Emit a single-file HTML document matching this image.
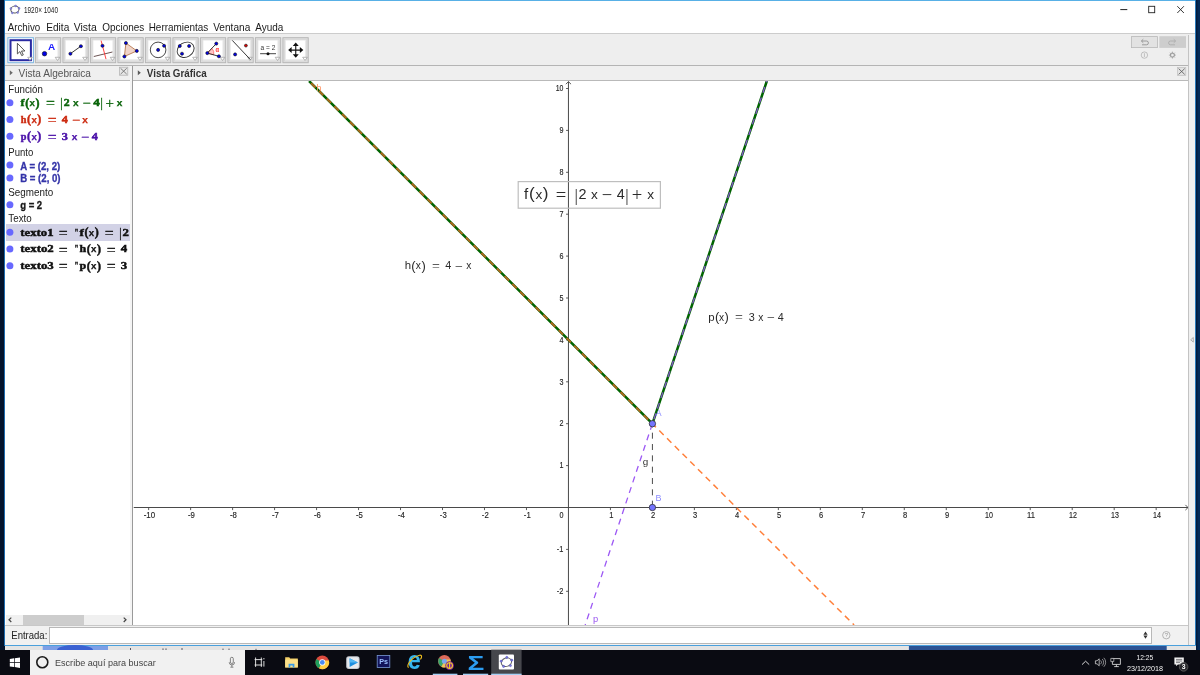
<!DOCTYPE html>
<html lang="es"><head><meta charset="utf-8"><title>1920x1040</title>
<style>
html,body{margin:0;padding:0}
body{width:1200px;height:675px;overflow:hidden;background:#03132c;position:relative;font-family:"Liberation Sans",sans-serif;color:#222}
.abs{position:absolute}
#win{position:absolute;left:5px;top:0;width:1190px;height:645.5px;background:#fff}
#lline{position:absolute;left:3.9px;top:0;width:1.2px;height:646px;background:#1d6cb0}
#rdark{position:absolute;left:1196px;top:0;width:4px;height:650px;background:linear-gradient(90deg,#021837,#032a58 60%)}
#topline{position:absolute;left:4.5px;top:0;width:1191.5px;height:1.2px;background:#58b0e6}
#rline{position:absolute;left:1194.9px;top:0;width:1.2px;height:646px;background:#2a7aba}
#bline{position:absolute;left:4.5px;top:644.8px;width:1191.5px;height:1.2px;background:#4aa0dc}
#toolbar{position:absolute;left:5px;top:33.4px;width:1190px;height:32px;background:#eeeeee;border-top:1.6px solid #cccccc;box-sizing:border-box}
#tbline{position:absolute;left:5px;top:64.8px;width:1184px;height:1.2px;background:#b4b4b4}
#hdr{position:absolute;left:5px;top:66px;width:1184px;height:14.3px;background:#efefef}
#hdrline{position:absolute;left:5px;top:80px;width:1184px;height:1px;background:#b9b9b9}
#rstrip{position:absolute;left:1189px;top:35px;width:6px;height:610px;background:#f0f0f0}
#rvline{position:absolute;left:1188px;top:35px;width:1px;height:610px;background:#c3c3c3}
#split{position:absolute;left:130px;top:66px;width:3px;height:559px;background:#f4f4f4;border-right:1px solid #9a9a9a;box-sizing:border-box}
#alg{position:absolute;left:5px;top:81px;width:125.5px;height:544px;background:#fff;overflow:hidden}
#sel{position:absolute;left:5.5px;top:224.3px;width:124.5px;height:16.3px;background:#d2d2e6}
#hscroll{position:absolute;left:5.5px;top:615px;width:124.5px;height:9.5px;background:#f0f0f0}
#hthumb{position:absolute;left:22.7px;top:615px;width:61.3px;height:9.5px;background:#cdcdcd}
#inputbar{position:absolute;left:5px;top:625px;width:1183px;height:20px;background:#f1f1f1;border-top:1px solid #c8c8c8;box-sizing:border-box}
#inputfld{position:absolute;left:49px;top:627px;width:1103px;height:17px;background:#fff;border:1px solid #b8b8b8;box-sizing:border-box}
#strip{position:absolute;left:4.5px;top:646px;width:1191px;height:4px;background:#e4e4e4}
#taskbar{position:absolute;left:0;top:649.7px;width:1200px;height:25.3px;background:#0a0b12}
#search{position:absolute;left:30px;top:649.7px;width:215.3px;height:25.3px;background:#f1f1f1}
#ovl{position:absolute;left:0;top:0;will-change:transform}
</style></head><body>

<div id="win"></div><div id="topline"></div><div id="rline"></div><div id="lline"></div><div id="rdark"></div>
<div id="toolbar"></div><div id="tbline"></div><div id="hdr"></div><div id="hdrline"></div><div id="rstrip"></div><div id="rvline"></div>
<div id="alg"></div><div id="split"></div><div id="sel"></div><div id="hscroll"></div><div id="hthumb"></div>
<div id="inputbar"></div><div id="inputfld"></div><div id="bline"></div><div id="strip"></div><div id="taskbar"></div><div id="search"></div>
<svg id="ovl" width="1200" height="675" viewBox="0 0 1200 675">
<g id="titlebar">
<ellipse cx="14.9" cy="9.5" rx="4.1" ry="3.5" transform="rotate(-15 14.9 9.5)" fill="none" stroke="#5a5a5a" stroke-width="1"/>
<circle cx="15.6" cy="5.9" r="1" fill="#8c8ce6" stroke="#4a4aa8" stroke-width="0.3"/>
<circle cx="19.1" cy="8.3" r="1" fill="#8c8ce6" stroke="#4a4aa8" stroke-width="0.3"/>
<circle cx="17.7" cy="12.6" r="1" fill="#8c8ce6" stroke="#4a4aa8" stroke-width="0.3"/>
<circle cx="12.3" cy="12.9" r="1" fill="#8c8ce6" stroke="#4a4aa8" stroke-width="0.3"/>
<circle cx="10.8" cy="8.6" r="1" fill="#8c8ce6" stroke="#4a4aa8" stroke-width="0.3"/>
<text x="24" y="12.5" font-family="'Liberation Sans',sans-serif" font-size="8.3" fill="#222" textLength="34" lengthAdjust="spacingAndGlyphs">1920× 1040</text>
<path d="M1120.3 9.6h7" stroke="#222" stroke-width="1"/>
<rect x="1148.7" y="6.3" width="6" height="6.4" fill="none" stroke="#222" stroke-width="0.9"/>
<path d="M1177.3 6.2l6.6 6.8M1183.9 6.2l-6.6 6.8" stroke="#222" stroke-width="0.9"/>
</g>
<g id="menu">
<text x="7.7" y="30.7" font-family="'Liberation Sans',sans-serif" font-size="10.3" fill="#1a1a1a" textLength="32.6" lengthAdjust="spacingAndGlyphs">Archivo</text>
<text x="46.2" y="30.7" font-family="'Liberation Sans',sans-serif" font-size="10.3" fill="#1a1a1a" textLength="23.1" lengthAdjust="spacingAndGlyphs">Edita</text>
<text x="73.7" y="30.7" font-family="'Liberation Sans',sans-serif" font-size="10.3" fill="#1a1a1a" textLength="23.1" lengthAdjust="spacingAndGlyphs">Vista</text>
<text x="102.2" y="30.7" font-family="'Liberation Sans',sans-serif" font-size="10.3" fill="#1a1a1a" textLength="42.1" lengthAdjust="spacingAndGlyphs">Opciones</text>
<text x="148.7" y="30.7" font-family="'Liberation Sans',sans-serif" font-size="10.3" fill="#1a1a1a" textLength="59.6" lengthAdjust="spacingAndGlyphs">Herramientas</text>
<text x="213.2" y="30.7" font-family="'Liberation Sans',sans-serif" font-size="10.3" fill="#1a1a1a" textLength="37.1" lengthAdjust="spacingAndGlyphs">Ventana</text>
<text x="255.2" y="30.7" font-family="'Liberation Sans',sans-serif" font-size="10.3" fill="#1a1a1a" textLength="28.1" lengthAdjust="spacingAndGlyphs">Ayuda</text>
</g>
<g id="tools">
<rect x="7.9" y="37.7" width="25.5" height="25" fill="#fff" stroke="#7ab4e0" stroke-width="1"/>
<rect x="10.5" y="40.2" width="20.4" height="20" fill="#fff" stroke="#2b2ba2" stroke-width="2"/>
<path d="M27.7 57.3h4.6l-2.3 3.2z" fill="#fff" stroke="#9a9a9a" stroke-width="0.7"/>
<rect x="35.4" y="37.7" width="25.3" height="25" fill="#e0e0e0" stroke="#b6b6b6" stroke-width="1"/>
<rect x="37.1" y="39.4" width="21.9" height="21.6" fill="#e9e9e9" stroke="#d2d2d2" stroke-width="0.6"/>
<rect x="38.4" y="40.6" width="19" height="18.6" fill="#fff"/>
<path d="M55.2 57.3h4.6l-2.3 3.2z" fill="#fff" stroke="#9a9a9a" stroke-width="0.7"/>
<rect x="62.9" y="37.7" width="25.3" height="25" fill="#e0e0e0" stroke="#b6b6b6" stroke-width="1"/>
<rect x="64.6" y="39.4" width="21.9" height="21.6" fill="#e9e9e9" stroke="#d2d2d2" stroke-width="0.6"/>
<rect x="65.9" y="40.6" width="19" height="18.6" fill="#fff"/>
<path d="M82.7 57.3h4.6l-2.3 3.2z" fill="#fff" stroke="#9a9a9a" stroke-width="0.7"/>
<rect x="90.4" y="37.7" width="25.3" height="25" fill="#e0e0e0" stroke="#b6b6b6" stroke-width="1"/>
<rect x="92.1" y="39.4" width="21.9" height="21.6" fill="#e9e9e9" stroke="#d2d2d2" stroke-width="0.6"/>
<rect x="93.4" y="40.6" width="19" height="18.6" fill="#fff"/>
<path d="M110.2 57.3h4.6l-2.3 3.2z" fill="#fff" stroke="#9a9a9a" stroke-width="0.7"/>
<rect x="117.9" y="37.7" width="25.3" height="25" fill="#e0e0e0" stroke="#b6b6b6" stroke-width="1"/>
<rect x="119.6" y="39.4" width="21.9" height="21.6" fill="#e9e9e9" stroke="#d2d2d2" stroke-width="0.6"/>
<rect x="120.9" y="40.6" width="19" height="18.6" fill="#fff"/>
<path d="M137.7 57.3h4.6l-2.3 3.2z" fill="#fff" stroke="#9a9a9a" stroke-width="0.7"/>
<rect x="145.4" y="37.7" width="25.3" height="25" fill="#e0e0e0" stroke="#b6b6b6" stroke-width="1"/>
<rect x="147.1" y="39.4" width="21.9" height="21.6" fill="#e9e9e9" stroke="#d2d2d2" stroke-width="0.6"/>
<rect x="148.4" y="40.6" width="19" height="18.6" fill="#fff"/>
<path d="M165.2 57.3h4.6l-2.3 3.2z" fill="#fff" stroke="#9a9a9a" stroke-width="0.7"/>
<rect x="172.9" y="37.7" width="25.3" height="25" fill="#e0e0e0" stroke="#b6b6b6" stroke-width="1"/>
<rect x="174.6" y="39.4" width="21.9" height="21.6" fill="#e9e9e9" stroke="#d2d2d2" stroke-width="0.6"/>
<rect x="175.9" y="40.6" width="19" height="18.6" fill="#fff"/>
<path d="M192.7 57.3h4.6l-2.3 3.2z" fill="#fff" stroke="#9a9a9a" stroke-width="0.7"/>
<rect x="200.4" y="37.7" width="25.3" height="25" fill="#e0e0e0" stroke="#b6b6b6" stroke-width="1"/>
<rect x="202.1" y="39.4" width="21.9" height="21.6" fill="#e9e9e9" stroke="#d2d2d2" stroke-width="0.6"/>
<rect x="203.4" y="40.6" width="19" height="18.6" fill="#fff"/>
<path d="M220.2 57.3h4.6l-2.3 3.2z" fill="#fff" stroke="#9a9a9a" stroke-width="0.7"/>
<rect x="227.9" y="37.7" width="25.3" height="25" fill="#e0e0e0" stroke="#b6b6b6" stroke-width="1"/>
<rect x="229.6" y="39.4" width="21.9" height="21.6" fill="#e9e9e9" stroke="#d2d2d2" stroke-width="0.6"/>
<rect x="230.9" y="40.6" width="19" height="18.6" fill="#fff"/>
<path d="M247.7 57.3h4.6l-2.3 3.2z" fill="#fff" stroke="#9a9a9a" stroke-width="0.7"/>
<rect x="255.4" y="37.7" width="25.3" height="25" fill="#e0e0e0" stroke="#b6b6b6" stroke-width="1"/>
<rect x="257.1" y="39.4" width="21.9" height="21.6" fill="#e9e9e9" stroke="#d2d2d2" stroke-width="0.6"/>
<rect x="258.4" y="40.6" width="19" height="18.6" fill="#fff"/>
<path d="M275.2 57.3h4.6l-2.3 3.2z" fill="#fff" stroke="#9a9a9a" stroke-width="0.7"/>
<rect x="282.9" y="37.7" width="25.3" height="25" fill="#e0e0e0" stroke="#b6b6b6" stroke-width="1"/>
<rect x="284.6" y="39.4" width="21.9" height="21.6" fill="#e9e9e9" stroke="#d2d2d2" stroke-width="0.6"/>
<rect x="285.9" y="40.6" width="19" height="18.6" fill="#fff"/>
<path d="M302.7 57.3h4.6l-2.3 3.2z" fill="#fff" stroke="#9a9a9a" stroke-width="0.7"/>
<path d="M17.4 43.3v10.6l2.5-2.3 1.8 4 1.6-0.7-1.8-3.9h3.4z" fill="#fff" stroke="#444" stroke-width="0.9" stroke-linejoin="round"/>
<circle cx="44.5" cy="53.7" r="2.25" fill="#0000e6" stroke="#111" stroke-width="0.6"/>
<text x="48" y="49.9" font-family="'Liberation Sans',sans-serif" font-size="9.8" fill="#1a1aff" font-weight="bold" textLength="7.2" lengthAdjust="spacingAndGlyphs">A</text>
<path d="M70.4 53.7L80.9 46.2" stroke="#222" stroke-width="0.9"/><circle cx="70.4" cy="53.7" r="1.55" fill="#0000e6" stroke="#111" stroke-width="0.6"/><circle cx="80.9" cy="46.2" r="1.55" fill="#0000e6" stroke="#111" stroke-width="0.6"/>
<path d="M93.8 56.5L112.4 52" stroke="#5a4040" stroke-width="0.9"/><path d="M101.1 40.6L106 59.1" stroke="#ff3030" stroke-width="0.9"/><circle cx="102.5" cy="45.8" r="1.55" fill="#0000e6" stroke="#111" stroke-width="0.6"/>
<path d="M125.9 43L136.8 50.9L124.4 56.5z" fill="#f0d4c8" stroke="#b87850" stroke-width="0.9"/><circle cx="125.9" cy="43" r="1.55" fill="#0000e6" stroke="#111" stroke-width="0.6"/><circle cx="136.8" cy="50.9" r="1.55" fill="#0000e6" stroke="#111" stroke-width="0.6"/><circle cx="124.4" cy="56.5" r="1.55" fill="#0000e6" stroke="#111" stroke-width="0.6"/>
<circle cx="158.1" cy="49.9" r="7.8" fill="none" stroke="#333" stroke-width="0.9"/><circle cx="158.1" cy="49.9" r="1.55" fill="#0000e6" stroke="#111" stroke-width="0.6"/><circle cx="164.1" cy="45.8" r="1.55" fill="#0000e6" stroke="#111" stroke-width="0.6"/>
<ellipse cx="185.6" cy="49.8" rx="8.9" ry="7.2" transform="rotate(-32 185.6 49.8)" fill="none" stroke="#333" stroke-width="0.9"/><circle cx="179.8" cy="46" r="1.55" fill="#0000e6" stroke="#111" stroke-width="0.6"/><circle cx="189.1" cy="46" r="1.55" fill="#0000e6" stroke="#111" stroke-width="0.6"/><circle cx="182" cy="53.7" r="1.55" fill="#0000e6" stroke="#111" stroke-width="0.6"/>
<path d="M207.3 53.1L211.8 48.3A6.6 6.6 0 0 1 213.7 54.8z" fill="#ffc4c4" stroke="#ff4a4a" stroke-width="0.6"/><path d="M216.3 43.6L207.3 53.1L218.9 56.3" fill="none" stroke="#222" stroke-width="0.9"/><circle cx="207.3" cy="53.1" r="1.55" fill="#0000e6" stroke="#111" stroke-width="0.6"/><circle cx="216.3" cy="43.6" r="1.55" fill="#0000e6" stroke="#111" stroke-width="0.6"/><circle cx="218.9" cy="56.3" r="1.55" fill="#0000e6" stroke="#111" stroke-width="0.6"/>
<text x="215.6" y="51.9" font-family="'Liberation Sans',sans-serif" font-size="6.6" fill="#ff3030" font-weight="bold" textLength="3.6" lengthAdjust="spacingAndGlyphs">α</text>
<path d="M232.3 40.4L250.3 59.5" stroke="#222" stroke-width="0.9"/><circle cx="245.9" cy="45.6" r="1.4500000000000002" fill="#e00000" stroke="#111" stroke-width="0.6"/><circle cx="235.1" cy="54.4" r="1.55" fill="#0000e6" stroke="#111" stroke-width="0.6"/>
<text x="260.6" y="49.9" font-family="'Liberation Sans',sans-serif" font-size="7.2" fill="#333" textLength="14.7" lengthAdjust="spacingAndGlyphs">a = 2</text>
<path d="M260.1 53.7H276" stroke="#333" stroke-width="0.9"/><circle cx="268" cy="53.7" r="1.5" fill="#111"/>
<path d="M290.75 50.1H300.75M295.75 45.1V55.1" stroke="#111" stroke-width="1.1"/>
<path d="M288.15 50.1l3.5-3v6zM303.35 50.1l-3.5-3v6zM295.75 42.5l-3 3.5h6zM295.75 57.7l-3-3.5h6z" fill="#111"/>
<rect x="1131.5" y="36.6" width="26" height="11" fill="#e2e2e2" stroke="#b8b8b8" stroke-width="0.8"/>
<rect x="1159.3" y="36.2" width="26.7" height="11.7" fill="#cdcdcd"/>
<path d="M1141.5 41h5a1.9 1.9 0 0 1 0 3.8h-4.5M1143.3 39.2l-1.9 1.8 1.9 1.8" fill="none" stroke="#8a8a8a" stroke-width="0.8"/>
<path d="M1175.5 41h-5a1.9 1.9 0 0 0 0 3.8h4.5M1173.7 39.2l1.9 1.8-1.9 1.8" fill="none" stroke="#a8a8a8" stroke-width="0.8"/>
<circle cx="1144.4" cy="55.1" r="3.2" fill="none" stroke="#aaa" stroke-width="0.7"/><path d="M1144.4 53.2v3.8" stroke="#aaa" stroke-width="0.7"/>
<circle cx="1172.4" cy="55.1" r="2.1" fill="none" stroke="#999" stroke-width="1"/><path d="M1172.4 51.6v7M1168.9 55.1h7M1170 52.7l4.8 4.8M1174.8 52.7l-4.8 4.8" stroke="#999" stroke-width="0.7"/><circle cx="1172.4" cy="55.1" r="1.2" fill="#eee"/>
</g>
<g id="headers">
<path d="M9.8 70.2v5l3-2.5z" fill="#6a6a6a"/>
<text x="18.6" y="76.7" font-family="'Liberation Sans',sans-serif" font-size="10.3" fill="#555" textLength="72.4" lengthAdjust="spacingAndGlyphs">Vista Algebraica</text>
<rect x="119.5" y="67.2" width="8.3" height="8" fill="#e6e6e6" stroke="#b0b0b0" stroke-width="0.7"/><path d="M120.6 68.3l6.1 5.8M126.7 68.3l-6.1 5.8" stroke="#666" stroke-width="0.8"/>
<path d="M137.8 70.2v5l3-2.5z" fill="#5a5a5a"/>
<text x="146.8" y="76.7" font-family="'Liberation Sans',sans-serif" font-size="10.3" fill="#333" font-weight="bold" textLength="60" lengthAdjust="spacingAndGlyphs">Vista Gráfica</text>
<rect x="1177.5" y="67.5" width="8.3" height="8" fill="#e2e2e2" stroke="#c0c0c0" stroke-width="0.7"/><path d="M1178.6 68.6l6.1 5.8M1184.7 68.6l-6.1 5.8" stroke="#555" stroke-width="0.8"/>
<path d="M1193.3 337.5l-2.6 2.3 2.6 2.3z" fill="none" stroke="#888" stroke-width="0.6"/>
</g>
<g id="algebra">
<text x="8.3" y="92.7" font-family="'Liberation Sans',sans-serif" font-size="10.3" fill="#222" textLength="34.5" lengthAdjust="spacingAndGlyphs">Función</text>
<circle cx="9.9" cy="102.75" r="3.5" fill="#6868ff"/>
<text x="20.6" y="105.9" font-family="'Liberation Serif',serif" font-size="11.2" fill="#0a640a" font-weight="bold" textLength="4" lengthAdjust="spacingAndGlyphs" stroke="#0a640a" stroke-width="0.5">f</text><text x="25.2" y="106.5" font-family="'Liberation Serif',serif" font-size="12.8" fill="#0a640a" font-weight="bold" textLength="4" lengthAdjust="spacingAndGlyphs" stroke="#0a640a" stroke-width="0.5">(</text><text x="29.6" y="105.9" font-family="'Liberation Sans',sans-serif" font-size="9.8" fill="#0a640a" font-weight="bold" textLength="5.4" lengthAdjust="spacingAndGlyphs" stroke="#0a640a" stroke-width="0.25">x</text><text x="35.5" y="106.5" font-family="'Liberation Serif',serif" font-size="12.8" fill="#0a640a" font-weight="bold" textLength="4" lengthAdjust="spacingAndGlyphs" stroke="#0a640a" stroke-width="0.5">)</text><text x="45.9" y="108.2" font-family="'Liberation Serif',serif" font-size="15" fill="#0a640a" textLength="8.9" lengthAdjust="spacingAndGlyphs" stroke="#0a640a" stroke-width="0.3">=</text><text x="60.6" y="107.1" font-family="'Liberation Serif',serif" font-size="13.4" fill="#0a640a" font-weight="bold" textLength="1.8" lengthAdjust="spacingAndGlyphs" stroke="#0a640a" stroke-width="0.5">|</text><text x="63.8" y="105.9" font-family="'Liberation Serif',serif" font-size="10.9" fill="#0a640a" font-weight="bold" textLength="5.9" lengthAdjust="spacingAndGlyphs" stroke="#0a640a" stroke-width="0.5">2</text><text x="73" y="105.9" font-family="'Liberation Sans',sans-serif" font-size="9.8" fill="#0a640a" font-weight="bold" textLength="5.6" lengthAdjust="spacingAndGlyphs" stroke="#0a640a" stroke-width="0.25">x</text><text x="82.4" y="108.2" font-family="'Liberation Serif',serif" font-size="15" fill="#0a640a" textLength="8.2" lengthAdjust="spacingAndGlyphs" stroke="#0a640a" stroke-width="0.3">−</text><text x="93.3" y="105.9" font-family="'Liberation Serif',serif" font-size="10.9" fill="#0a640a" font-weight="bold" textLength="6.6" lengthAdjust="spacingAndGlyphs" stroke="#0a640a" stroke-width="0.5">4</text><text x="100.7" y="107.1" font-family="'Liberation Serif',serif" font-size="13.4" fill="#0a640a" font-weight="bold" textLength="1.8" lengthAdjust="spacingAndGlyphs" stroke="#0a640a" stroke-width="0.5">|</text><text x="105.4" y="108.2" font-family="'Liberation Serif',serif" font-size="15" fill="#0a640a" textLength="8.4" lengthAdjust="spacingAndGlyphs" stroke="#0a640a" stroke-width="0.3">+</text><text x="116.8" y="105.9" font-family="'Liberation Sans',sans-serif" font-size="9.8" fill="#0a640a" font-weight="bold" textLength="5.6" lengthAdjust="spacingAndGlyphs" stroke="#0a640a" stroke-width="0.25">x</text>
<circle cx="9.9" cy="119.5" r="3.5" fill="#6868ff"/>
<text x="20.7" y="122.8" font-family="'Liberation Serif',serif" font-size="11.2" fill="#cc2a10" font-weight="bold" textLength="5.7" lengthAdjust="spacingAndGlyphs" stroke="#cc2a10" stroke-width="0.5">h</text><text x="27" y="123.4" font-family="'Liberation Serif',serif" font-size="12.8" fill="#cc2a10" font-weight="bold" textLength="4" lengthAdjust="spacingAndGlyphs" stroke="#cc2a10" stroke-width="0.5">(</text><text x="31.4" y="122.8" font-family="'Liberation Sans',sans-serif" font-size="9.8" fill="#cc2a10" font-weight="bold" textLength="5.4" lengthAdjust="spacingAndGlyphs" stroke="#cc2a10" stroke-width="0.25">x</text><text x="37.3" y="123.4" font-family="'Liberation Serif',serif" font-size="12.8" fill="#cc2a10" font-weight="bold" textLength="4" lengthAdjust="spacingAndGlyphs" stroke="#cc2a10" stroke-width="0.5">)</text><text x="47.8" y="125.1" font-family="'Liberation Serif',serif" font-size="15" fill="#cc2a10" textLength="8.9" lengthAdjust="spacingAndGlyphs" stroke="#cc2a10" stroke-width="0.3">=</text><text x="61.7" y="122.8" font-family="'Liberation Serif',serif" font-size="10.9" fill="#cc2a10" font-weight="bold" textLength="6.1" lengthAdjust="spacingAndGlyphs" stroke="#cc2a10" stroke-width="0.5">4</text><text x="72" y="125.1" font-family="'Liberation Serif',serif" font-size="15" fill="#cc2a10" textLength="8.2" lengthAdjust="spacingAndGlyphs" stroke="#cc2a10" stroke-width="0.3">−</text><text x="82.3" y="122.8" font-family="'Liberation Sans',sans-serif" font-size="9.8" fill="#cc2a10" font-weight="bold" textLength="5.6" lengthAdjust="spacingAndGlyphs" stroke="#cc2a10" stroke-width="0.25">x</text>
<circle cx="9.9" cy="136.3" r="3.5" fill="#6868ff"/>
<text x="20.7" y="139.6" font-family="'Liberation Serif',serif" font-size="11.2" fill="#4a10a8" font-weight="bold" textLength="5.7" lengthAdjust="spacingAndGlyphs" stroke="#4a10a8" stroke-width="0.5">p</text><text x="27" y="140.2" font-family="'Liberation Serif',serif" font-size="12.8" fill="#4a10a8" font-weight="bold" textLength="4" lengthAdjust="spacingAndGlyphs" stroke="#4a10a8" stroke-width="0.5">(</text><text x="31.4" y="139.6" font-family="'Liberation Sans',sans-serif" font-size="9.8" fill="#4a10a8" font-weight="bold" textLength="5.4" lengthAdjust="spacingAndGlyphs" stroke="#4a10a8" stroke-width="0.25">x</text><text x="37.3" y="140.2" font-family="'Liberation Serif',serif" font-size="12.8" fill="#4a10a8" font-weight="bold" textLength="4" lengthAdjust="spacingAndGlyphs" stroke="#4a10a8" stroke-width="0.5">)</text><text x="47.8" y="141.9" font-family="'Liberation Serif',serif" font-size="15" fill="#4a10a8" textLength="8.9" lengthAdjust="spacingAndGlyphs" stroke="#4a10a8" stroke-width="0.3">=</text><text x="61.7" y="139.6" font-family="'Liberation Serif',serif" font-size="10.9" fill="#4a10a8" font-weight="bold" textLength="6.1" lengthAdjust="spacingAndGlyphs" stroke="#4a10a8" stroke-width="0.5">3</text><text x="71.7" y="139.6" font-family="'Liberation Sans',sans-serif" font-size="9.8" fill="#4a10a8" font-weight="bold" textLength="5.6" lengthAdjust="spacingAndGlyphs" stroke="#4a10a8" stroke-width="0.25">x</text><text x="81" y="141.9" font-family="'Liberation Serif',serif" font-size="15" fill="#4a10a8" textLength="8.2" lengthAdjust="spacingAndGlyphs" stroke="#4a10a8" stroke-width="0.3">−</text><text x="91.7" y="139.6" font-family="'Liberation Serif',serif" font-size="10.9" fill="#4a10a8" font-weight="bold" textLength="6.1" lengthAdjust="spacingAndGlyphs" stroke="#4a10a8" stroke-width="0.5">4</text>
<text x="8.3" y="156.4" font-family="'Liberation Sans',sans-serif" font-size="10.3" fill="#222" textLength="24.9" lengthAdjust="spacingAndGlyphs">Punto</text>
<circle cx="9.9" cy="165" r="3.5" fill="#6868ff"/>
<text x="20.2" y="169.5" font-family="'Liberation Sans',sans-serif" font-size="10.3" fill="#3434a8" font-weight="bold" textLength="40" lengthAdjust="spacingAndGlyphs" stroke="#3434a8" stroke-width="0.3">A = (2, 2)</text>
<circle cx="9.9" cy="178" r="3.5" fill="#6868ff"/>
<text x="20.2" y="182.4" font-family="'Liberation Sans',sans-serif" font-size="10.3" fill="#3434a8" font-weight="bold" textLength="40.4" lengthAdjust="spacingAndGlyphs" stroke="#3434a8" stroke-width="0.3">B = (2, 0)</text>
<text x="8.3" y="195.6" font-family="'Liberation Sans',sans-serif" font-size="10.3" fill="#222" textLength="44.9" lengthAdjust="spacingAndGlyphs">Segmento</text>
<circle cx="9.9" cy="204.8" r="3.5" fill="#6868ff"/>
<text x="20.2" y="208.7" font-family="'Liberation Sans',sans-serif" font-size="10.3" fill="#1a1a1a" font-weight="bold" textLength="22" lengthAdjust="spacingAndGlyphs" stroke="#1a1a1a" stroke-width="0.3">g = 2</text>
<text x="8.3" y="221.9" font-family="'Liberation Sans',sans-serif" font-size="10.3" fill="#222" textLength="23.4" lengthAdjust="spacingAndGlyphs">Texto</text>
<circle cx="9.9" cy="232.3" r="3.5" fill="#6868ff"/>
<text x="20.3" y="235.5" font-family="'Liberation Serif',serif" font-size="11.4" fill="#111" font-weight="bold" textLength="33.2" lengthAdjust="spacingAndGlyphs" stroke="#111" stroke-width="0.5">texto1</text><text x="58.8" y="237.8" font-family="'Liberation Serif',serif" font-size="15" fill="#111" textLength="8.9" lengthAdjust="spacingAndGlyphs" stroke="#111" stroke-width="0.3">=</text><text x="74.6" y="235.5" font-family="'Liberation Serif',serif" font-size="10.5" fill="#111" font-weight="bold" textLength="4" lengthAdjust="spacingAndGlyphs" stroke="#111" stroke-width="0.5">"</text><text x="79.4" y="235.5" font-family="'Liberation Serif',serif" font-size="11.2" fill="#111" font-weight="bold" textLength="4.4" lengthAdjust="spacingAndGlyphs" stroke="#111" stroke-width="0.5">f</text><text x="84.4" y="236.1" font-family="'Liberation Serif',serif" font-size="12.8" fill="#111" font-weight="bold" textLength="4" lengthAdjust="spacingAndGlyphs" stroke="#111" stroke-width="0.5">(</text><text x="88.8" y="235.5" font-family="'Liberation Sans',sans-serif" font-size="9.8" fill="#111" font-weight="bold" textLength="5.4" lengthAdjust="spacingAndGlyphs" stroke="#111" stroke-width="0.25">x</text><text x="94.7" y="236.1" font-family="'Liberation Serif',serif" font-size="12.8" fill="#111" font-weight="bold" textLength="4" lengthAdjust="spacingAndGlyphs" stroke="#111" stroke-width="0.5">)</text><text x="104.8" y="237.8" font-family="'Liberation Serif',serif" font-size="15" fill="#111" textLength="8.9" lengthAdjust="spacingAndGlyphs" stroke="#111" stroke-width="0.3">=</text><text x="119.6" y="236.7" font-family="'Liberation Serif',serif" font-size="13.4" fill="#111" font-weight="bold" textLength="1.8" lengthAdjust="spacingAndGlyphs" stroke="#111" stroke-width="0.5">|</text><text x="122.4" y="235.5" font-family="'Liberation Serif',serif" font-size="10.9" fill="#111" font-weight="bold" textLength="6.4" lengthAdjust="spacingAndGlyphs" stroke="#111" stroke-width="0.5">2</text>
<circle cx="9.9" cy="249" r="3.5" fill="#6868ff"/>
<text x="20.3" y="252.2" font-family="'Liberation Serif',serif" font-size="11.4" fill="#111" font-weight="bold" textLength="33.5" lengthAdjust="spacingAndGlyphs" stroke="#111" stroke-width="0.5">texto2</text><text x="58.8" y="254.5" font-family="'Liberation Serif',serif" font-size="15" fill="#111" textLength="8.9" lengthAdjust="spacingAndGlyphs" stroke="#111" stroke-width="0.3">=</text><text x="74.6" y="252.2" font-family="'Liberation Serif',serif" font-size="10.5" fill="#111" font-weight="bold" textLength="4" lengthAdjust="spacingAndGlyphs" stroke="#111" stroke-width="0.5">"</text><text x="79.4" y="252.2" font-family="'Liberation Serif',serif" font-size="11.2" fill="#111" font-weight="bold" textLength="6.7" lengthAdjust="spacingAndGlyphs" stroke="#111" stroke-width="0.5">h</text><text x="86.7" y="252.8" font-family="'Liberation Serif',serif" font-size="12.8" fill="#111" font-weight="bold" textLength="4" lengthAdjust="spacingAndGlyphs" stroke="#111" stroke-width="0.5">(</text><text x="91.1" y="252.2" font-family="'Liberation Sans',sans-serif" font-size="9.8" fill="#111" font-weight="bold" textLength="5.4" lengthAdjust="spacingAndGlyphs" stroke="#111" stroke-width="0.25">x</text><text x="97" y="252.8" font-family="'Liberation Serif',serif" font-size="12.8" fill="#111" font-weight="bold" textLength="4" lengthAdjust="spacingAndGlyphs" stroke="#111" stroke-width="0.5">)</text><text x="106.8" y="254.5" font-family="'Liberation Serif',serif" font-size="15" fill="#111" textLength="8.9" lengthAdjust="spacingAndGlyphs" stroke="#111" stroke-width="0.3">=</text><text x="120.8" y="252.2" font-family="'Liberation Serif',serif" font-size="10.9" fill="#111" font-weight="bold" textLength="6.4" lengthAdjust="spacingAndGlyphs" stroke="#111" stroke-width="0.5">4</text>
<circle cx="9.9" cy="265.8" r="3.5" fill="#6868ff"/>
<text x="20.3" y="269" font-family="'Liberation Serif',serif" font-size="11.4" fill="#111" font-weight="bold" textLength="33.5" lengthAdjust="spacingAndGlyphs" stroke="#111" stroke-width="0.5">texto3</text><text x="58.8" y="271.3" font-family="'Liberation Serif',serif" font-size="15" fill="#111" textLength="8.9" lengthAdjust="spacingAndGlyphs" stroke="#111" stroke-width="0.3">=</text><text x="74.6" y="269" font-family="'Liberation Serif',serif" font-size="10.5" fill="#111" font-weight="bold" textLength="4" lengthAdjust="spacingAndGlyphs" stroke="#111" stroke-width="0.5">"</text><text x="79.4" y="269" font-family="'Liberation Serif',serif" font-size="11.2" fill="#111" font-weight="bold" textLength="6.7" lengthAdjust="spacingAndGlyphs" stroke="#111" stroke-width="0.5">p</text><text x="86.7" y="269.6" font-family="'Liberation Serif',serif" font-size="12.8" fill="#111" font-weight="bold" textLength="4" lengthAdjust="spacingAndGlyphs" stroke="#111" stroke-width="0.5">(</text><text x="91.1" y="269" font-family="'Liberation Sans',sans-serif" font-size="9.8" fill="#111" font-weight="bold" textLength="5.4" lengthAdjust="spacingAndGlyphs" stroke="#111" stroke-width="0.25">x</text><text x="97" y="269.6" font-family="'Liberation Serif',serif" font-size="12.8" fill="#111" font-weight="bold" textLength="4" lengthAdjust="spacingAndGlyphs" stroke="#111" stroke-width="0.5">)</text><text x="106.8" y="271.3" font-family="'Liberation Serif',serif" font-size="15" fill="#111" textLength="8.9" lengthAdjust="spacingAndGlyphs" stroke="#111" stroke-width="0.3">=</text><text x="120.8" y="269" font-family="'Liberation Serif',serif" font-size="10.9" fill="#111" font-weight="bold" textLength="6.4" lengthAdjust="spacingAndGlyphs" stroke="#111" stroke-width="0.5">3</text>
<path d="M11.3 617.6l-2.3 2.2 2.3 2.2M123.7 617.6l2.3 2.2-2.3 2.2" fill="none" stroke="#444" stroke-width="1.2"/>
</g>
<g id="input">
<text x="11.3" y="639.3" font-family="'Liberation Sans',sans-serif" font-size="10.3" fill="#222" textLength="36" lengthAdjust="spacingAndGlyphs">Entrada:</text>
<path d="M1145.5 631.4l2.1 3.3h-4.2zM1145.5 638.8l2.1-3.3h-4.2z" fill="#333"/>
<circle cx="1166.3" cy="635.2" r="3.7" fill="none" stroke="#a4a4a4" stroke-width="0.8"/>
<text x="1164.7" y="637.4" font-family="'Liberation Sans',sans-serif" font-size="6" fill="#9a9a9a">?</text>
</g>
<clipPath id="gclip"><rect x="133.5" y="81" width="1054.5" height="544"/></clipPath>
<g id="graph" clip-path="url(#gclip)">
<path d="M133.5 507.5H1188M568.45 625V81.6" stroke="#4a4a4a" stroke-width="1"/>
<path d="M565.85 84.2L568.45 81.6L571.0500000000001 84.2" fill="none" stroke="#4a4a4a" stroke-width="0.9"/>
<path d="M1185.4 504.9L1188 507.5L1185.4 510.1" fill="none" stroke="#4a4a4a" stroke-width="0.9"/>
<path d="M148.65 507.5v2.6M190.63 507.5v2.6M232.61 507.5v2.6M274.59 507.5v2.6M316.57 507.5v2.6M358.55 507.5v2.6M400.53 507.5v2.6M442.51 507.5v2.6M484.49 507.5v2.6M526.47 507.5v2.6M610.43 507.5v2.6M652.41 507.5v2.6M694.39 507.5v2.6M736.37 507.5v2.6M778.35 507.5v2.6M820.33 507.5v2.6M862.31 507.5v2.6M904.29 507.5v2.6M946.27 507.5v2.6M988.25 507.5v2.6M1030.23 507.5v2.6M1072.21 507.5v2.6M1114.19 507.5v2.6M1156.17 507.5v2.6M568.45 591.3h-2.4M568.45 549.4h-2.4M568.45 465.6h-2.4M568.45 423.7h-2.4M568.45 381.8h-2.4M568.45 339.9h-2.4M568.45 298h-2.4M568.45 256.1h-2.4M568.45 214.2h-2.4M568.45 172.3h-2.4M568.45 130.4h-2.4M568.45 88.5h-2.4" stroke="#4a4a4a" stroke-width="0.9"/>
<g font-family="'Liberation Sans',sans-serif" font-size="8.6" fill="#262626" stroke="#262626" stroke-width="0.15">
<text x="149.45" y="517.9" text-anchor="middle" textLength="11.5" lengthAdjust="spacingAndGlyphs">-10</text>
<text x="191.43" y="517.9" text-anchor="middle" textLength="6.9" lengthAdjust="spacingAndGlyphs">-9</text>
<text x="233.41" y="517.9" text-anchor="middle" textLength="6.9" lengthAdjust="spacingAndGlyphs">-8</text>
<text x="275.39" y="517.9" text-anchor="middle" textLength="6.9" lengthAdjust="spacingAndGlyphs">-7</text>
<text x="317.37" y="517.9" text-anchor="middle" textLength="6.9" lengthAdjust="spacingAndGlyphs">-6</text>
<text x="359.35" y="517.9" text-anchor="middle" textLength="6.9" lengthAdjust="spacingAndGlyphs">-5</text>
<text x="401.33" y="517.9" text-anchor="middle" textLength="6.9" lengthAdjust="spacingAndGlyphs">-4</text>
<text x="443.31" y="517.9" text-anchor="middle" textLength="6.9" lengthAdjust="spacingAndGlyphs">-3</text>
<text x="485.29" y="517.9" text-anchor="middle" textLength="6.9" lengthAdjust="spacingAndGlyphs">-2</text>
<text x="527.27" y="517.9" text-anchor="middle" textLength="6.9" lengthAdjust="spacingAndGlyphs">-1</text>
<text x="611.23" y="517.9" text-anchor="middle" textLength="4.2" lengthAdjust="spacingAndGlyphs">1</text>
<text x="653.21" y="517.9" text-anchor="middle" textLength="4.2" lengthAdjust="spacingAndGlyphs">2</text>
<text x="695.19" y="517.9" text-anchor="middle" textLength="4.2" lengthAdjust="spacingAndGlyphs">3</text>
<text x="737.17" y="517.9" text-anchor="middle" textLength="4.2" lengthAdjust="spacingAndGlyphs">4</text>
<text x="779.15" y="517.9" text-anchor="middle" textLength="4.2" lengthAdjust="spacingAndGlyphs">5</text>
<text x="821.13" y="517.9" text-anchor="middle" textLength="4.2" lengthAdjust="spacingAndGlyphs">6</text>
<text x="863.11" y="517.9" text-anchor="middle" textLength="4.2" lengthAdjust="spacingAndGlyphs">7</text>
<text x="905.09" y="517.9" text-anchor="middle" textLength="4.2" lengthAdjust="spacingAndGlyphs">8</text>
<text x="947.07" y="517.9" text-anchor="middle" textLength="4.2" lengthAdjust="spacingAndGlyphs">9</text>
<text x="989.05" y="517.9" text-anchor="middle" textLength="7.9" lengthAdjust="spacingAndGlyphs">10</text>
<text x="1031.03" y="517.9" text-anchor="middle" textLength="7.9" lengthAdjust="spacingAndGlyphs">11</text>
<text x="1073.01" y="517.9" text-anchor="middle" textLength="7.9" lengthAdjust="spacingAndGlyphs">12</text>
<text x="1114.99" y="517.9" text-anchor="middle" textLength="7.9" lengthAdjust="spacingAndGlyphs">13</text>
<text x="1156.97" y="517.9" text-anchor="middle" textLength="7.9" lengthAdjust="spacingAndGlyphs">14</text>
<text x="561.5" y="517.9" text-anchor="middle" textLength="4" lengthAdjust="spacingAndGlyphs">0</text>
<text x="563.4" y="594" text-anchor="end" textLength="6.6" lengthAdjust="spacingAndGlyphs">-2</text>
<text x="563.4" y="552.1" text-anchor="end" textLength="6.6" lengthAdjust="spacingAndGlyphs">-1</text>
<text x="563.4" y="468.3" text-anchor="end" textLength="4.0" lengthAdjust="spacingAndGlyphs">1</text>
<text x="563.4" y="426.4" text-anchor="end" textLength="4.0" lengthAdjust="spacingAndGlyphs">2</text>
<text x="563.4" y="384.5" text-anchor="end" textLength="4.0" lengthAdjust="spacingAndGlyphs">3</text>
<text x="563.4" y="342.6" text-anchor="end" textLength="4.0" lengthAdjust="spacingAndGlyphs">4</text>
<text x="563.4" y="300.7" text-anchor="end" textLength="4.0" lengthAdjust="spacingAndGlyphs">5</text>
<text x="563.4" y="258.8" text-anchor="end" textLength="4.0" lengthAdjust="spacingAndGlyphs">6</text>
<text x="563.4" y="216.9" text-anchor="end" textLength="4.0" lengthAdjust="spacingAndGlyphs">7</text>
<text x="563.4" y="175" text-anchor="end" textLength="4.0" lengthAdjust="spacingAndGlyphs">8</text>
<text x="563.4" y="133.1" text-anchor="end" textLength="4.0" lengthAdjust="spacingAndGlyphs">9</text>
<text x="563.4" y="91.2" text-anchor="end" textLength="7.7" lengthAdjust="spacingAndGlyphs">10</text>
</g>
<rect x="518.2" y="181.6" width="142.2" height="26.6" fill="#fff" fill-opacity="0" stroke="#bebebe" stroke-width="1.2"/>
<path d="M309.06 81L652.41 423.7L766.86 81" fill="none" stroke="#006400" stroke-width="2.5" stroke-linejoin="miter"/>
<path d="M309.06 81L652.41 423.7" fill="none" stroke="#b0661c" stroke-width="1.9" stroke-dasharray="6.2 4.73" stroke-dashoffset="7.95"/>
<path d="M652.41 423.7L854.09 625" fill="none" stroke="#ff7e38" stroke-width="1.45" stroke-dasharray="6.2 4.73" stroke-dashoffset="1.21"/>
<path d="M766.86 81L652.41 423.7" fill="none" stroke="#8452cc" stroke-width="1.3" stroke-dasharray="6.1 5" stroke-dashoffset="4.75"/>
<path d="M652.41 423.7L585.18 625" fill="none" stroke="#9c58f4" stroke-width="1.3" stroke-dasharray="6.1 5" stroke-dashoffset="10.86"/>
<path d="M652.41 507.5V423.7" stroke="#4c4c4c" stroke-width="1" stroke-dasharray="6 5.33" stroke-dashoffset="10.5"/>
<circle cx="652.41" cy="423.7" r="3.2" fill="#7474ff" stroke="#333" stroke-width="0.8"/>
<circle cx="652.41" cy="507.5" r="3.2" fill="#7474ff" stroke="#333" stroke-width="0.8"/>
<text x="655.8" y="416.3" font-family="'Liberation Sans',sans-serif" font-size="9.3" fill="#8c8cff" textLength="5.8" lengthAdjust="spacingAndGlyphs">A</text>
<text x="655.6" y="501.2" font-family="'Liberation Sans',sans-serif" font-size="9.3" fill="#8c8cff" textLength="6" lengthAdjust="spacingAndGlyphs">B</text>
<text x="642.7" y="465" font-family="'Liberation Sans',sans-serif" font-size="9.6" fill="#333" textLength="5.5" lengthAdjust="spacingAndGlyphs">g</text>
<text x="316.6" y="90.8" font-family="'Liberation Sans',sans-serif" font-size="9.6" fill="#ff9462" textLength="5" lengthAdjust="spacingAndGlyphs">h</text>
<text x="593" y="621.9" font-family="'Liberation Sans',sans-serif" font-size="9.9" fill="#9955f0" textLength="5.2" lengthAdjust="spacingAndGlyphs">p</text>
<text x="407.85" y="269" text-anchor="middle" font-family="'Liberation Sans',sans-serif" font-size="11.4" fill="#2a2a2a">h</text><text x="413.35" y="269.52" text-anchor="middle" font-family="'Liberation Sans',sans-serif" font-size="12.9" fill="#2a2a2a">(</text><text x="418.2" y="269" text-anchor="middle" font-family="'Liberation Sans',sans-serif" font-size="10.2" fill="#2a2a2a">x</text><text x="423.6" y="269.52" text-anchor="middle" font-family="'Liberation Sans',sans-serif" font-size="12.9" fill="#2a2a2a">)</text><text x="436" y="270.65" text-anchor="middle" font-family="'Liberation Serif',serif" font-size="13.95" fill="#2a2a2a">=</text><text x="448.15" y="269" text-anchor="middle" font-family="'Liberation Sans',sans-serif" font-size="10.8" fill="#2a2a2a">4</text><text x="458.85" y="270.65" text-anchor="middle" font-family="'Liberation Serif',serif" font-size="13.95" fill="#2a2a2a">−</text><text x="468.85" y="269" text-anchor="middle" font-family="'Liberation Sans',sans-serif" font-size="10.2" fill="#2a2a2a">x</text>
<text x="711.5" y="320.7" text-anchor="middle" font-family="'Liberation Sans',sans-serif" font-size="11.4" fill="#2a2a2a">p</text><text x="717.2" y="321.22" text-anchor="middle" font-family="'Liberation Sans',sans-serif" font-size="12.9" fill="#2a2a2a">(</text><text x="721.6" y="320.7" text-anchor="middle" font-family="'Liberation Sans',sans-serif" font-size="10.2" fill="#2a2a2a">x</text><text x="726.7" y="321.22" text-anchor="middle" font-family="'Liberation Sans',sans-serif" font-size="12.9" fill="#2a2a2a">)</text><text x="738.85" y="322.35" text-anchor="middle" font-family="'Liberation Serif',serif" font-size="13.95" fill="#2a2a2a">=</text><text x="751.85" y="320.7" text-anchor="middle" font-family="'Liberation Sans',sans-serif" font-size="10.8" fill="#2a2a2a">3</text><text x="760.85" y="320.7" text-anchor="middle" font-family="'Liberation Sans',sans-serif" font-size="10.2" fill="#2a2a2a">x</text><text x="770.9" y="322.35" text-anchor="middle" font-family="'Liberation Serif',serif" font-size="13.95" fill="#2a2a2a">−</text><text x="780.85" y="320.7" text-anchor="middle" font-family="'Liberation Sans',sans-serif" font-size="10.8" fill="#2a2a2a">4</text>
<text x="526.2" y="198.7" text-anchor="middle" font-family="'Liberation Sans',sans-serif" font-size="15.2" fill="#2a2a2a">f</text><text x="531.9" y="199.4" text-anchor="middle" font-family="'Liberation Sans',sans-serif" font-size="17.2" fill="#2a2a2a">(</text><text x="538.8" y="198.7" text-anchor="middle" font-family="'Liberation Sans',sans-serif" font-size="13.6" fill="#2a2a2a">x</text><text x="545.7" y="199.4" text-anchor="middle" font-family="'Liberation Sans',sans-serif" font-size="17.2" fill="#2a2a2a">)</text><text x="561" y="200.9" text-anchor="middle" font-family="'Liberation Serif',serif" font-size="18.6" fill="#2a2a2a">=</text><text x="576.3" y="200.9" text-anchor="middle" font-family="'Liberation Serif',serif" font-size="17" fill="#2a2a2a">|</text><text x="582.5" y="198.7" text-anchor="middle" font-family="'Liberation Sans',sans-serif" font-size="14.4" fill="#2a2a2a">2</text><text x="594.5" y="198.7" text-anchor="middle" font-family="'Liberation Sans',sans-serif" font-size="13.6" fill="#2a2a2a">x</text><text x="607" y="200.9" text-anchor="middle" font-family="'Liberation Serif',serif" font-size="18.6" fill="#2a2a2a">−</text><text x="620.75" y="198.7" text-anchor="middle" font-family="'Liberation Sans',sans-serif" font-size="14.4" fill="#2a2a2a">4</text><text x="627" y="200.9" text-anchor="middle" font-family="'Liberation Serif',serif" font-size="17" fill="#2a2a2a">|</text><text x="637" y="200.9" text-anchor="middle" font-family="'Liberation Serif',serif" font-size="18.6" fill="#2a2a2a">+</text><text x="650.75" y="198.7" text-anchor="middle" font-family="'Liberation Sans',sans-serif" font-size="13.6" fill="#2a2a2a">x</text>
</g>
<g id="below">
<rect x="42.7" y="646" width="65.3" height="4" fill="#7d9fe6"/>
<path d="M57 650a18 5 0 0 1 36 0z" fill="#3c62d2"/>
<rect x="908.9" y="646" width="257.8" height="4" fill="#2c5394"/>
<path d="M130.5 648v2M163 648.4v1.6M166 648.4v1.6M182 648v2M223 648.6v1.4M229 648.6v1.4M256 648.8v1.2" stroke="#334" stroke-width="0.8"/>
</g>
<g id="taskbar-icons">
<path d="M9.8 658.9l4.2-0.6v4h-4.2zM14.7 658.2l5.3-0.8v4.9h-5.3zM9.8 663h4.2v4l-4.2-0.6zM14.7 663h5.3v4.9l-5.3-0.8z" fill="#fff"/>
<circle cx="42.3" cy="662.3" r="5.5" fill="none" stroke="#1c1c1c" stroke-width="1.6"/>
<text x="55" y="665.6" font-family="'Liberation Sans',sans-serif" font-size="9.4" fill="#444" textLength="100.8" lengthAdjust="spacingAndGlyphs">Escribe aquí para buscar</text>
<rect x="230.4" y="657.3" width="2.9" height="6.2" rx="1.4" fill="none" stroke="#555" stroke-width="0.7"/><path d="M229.2 662.2a2.7 2.7 0 0 0 5.4 0M231.9 665v2M230.4 667.2h3" fill="none" stroke="#555" stroke-width="0.7"/>
<path d="M255.6 657.5v9.4M261.3 657.5v9.4M254.6 659.6h7.7M254.6 665h7.7" fill="none" stroke="#f0f0f0" stroke-width="0.9"/><path d="M263.9 658v1.4M263.9 661v5.6" stroke="#f0f0f0" stroke-width="0.9"/>
<path d="M285.2 657.2h4l1 1.2h7.6v9h-12.6z" fill="#f4d068"/><rect x="285.2" y="659.6" width="12.6" height="7.8" fill="#fbe08a"/><path d="M288.6 667.4v-3.6h5.8v3.6h-1.7v-1.9h-2.4v1.9z" fill="#3a9be8"/>
<circle cx="322.3" cy="662.4" r="6.8" fill="#dd4b3e"/><path d="M322.3 662.4L316.4 659A6.8 6.8 0 0 0 319 668.3z" fill="#1fa15d"/><path d="M322.3 662.4L319 668.3A6.8 6.8 0 0 0 328.9 660.6L322.3 660.6z" fill="#ffce43"/><circle cx="322.3" cy="662.4" r="3.1" fill="#fff"/><circle cx="322.3" cy="662.4" r="2.4" fill="#4a8af4"/>
<rect x="346.2" y="656.3" width="13.4" height="12.6" rx="2.6" fill="#c8ccd2"/><rect x="347.2" y="657.3" width="11.4" height="10.6" rx="2" fill="#e8eaee"/><path d="M349.6 658.2l8.4 4.4-8.4 4.4z" fill="#1c8ee0"/><path d="M349.6 658.2l8.4 4.4h-8.4z" fill="#54b8f4"/>
<rect x="377.2" y="655.6" width="12.6" height="11.8" fill="#12145a" stroke="#7a9ad8" stroke-width="0.8"/>
<text x="379.2" y="664.4" font-family="'Liberation Sans',sans-serif" font-size="7.6" fill="#9cc0ff" font-weight="bold" textLength="8.8" lengthAdjust="spacingAndGlyphs">Ps</text>
<text x="407.8" y="668.8" font-family="'Liberation Sans',sans-serif" font-size="26" fill="#35b4ee" font-weight="bold" textLength="13" lengthAdjust="spacingAndGlyphs">e</text>
<path d="M408.6 667.6C405.5 665.5 412 657 419.6 655.2C422.6 654.8 421.6 658 420.4 659.4" fill="none" stroke="#f0c020" stroke-width="1.1"/>
<circle cx="444.4" cy="661.2" r="6.3" fill="#dd6a5a"/><path d="M444.4 661.2L439 658A6.3 6.3 0 0 0 441.4 666.7z" fill="#3aa56a"/><path d="M444.4 661.2L441.4 666.7A6.3 6.3 0 0 0 450.5 659.6L444.4 659.6z" fill="#ecc65a"/><circle cx="444.4" cy="661.2" r="2.5" fill="#7aa6f0"/>
<circle cx="449.6" cy="665.6" r="4.3" fill="#7a1c9c"/><circle cx="449.6" cy="665.6" r="2.9" fill="none" stroke="#f0d020" stroke-width="1.1"/><path d="M449.6 662.2v6.8" stroke="#f0d020" stroke-width="1.1"/>
<text x="467.6" y="669.6" font-family="'Liberation Sans',sans-serif" font-size="19.5" fill="#2c9cf0" font-weight="bold" textLength="16.8" lengthAdjust="spacingAndGlyphs">Σ</text>
<rect x="491.2" y="649.7" width="30.4" height="25.3" fill="#46474c"/>
<rect x="498.8" y="654.6" width="15.2" height="15" rx="1" fill="#fff"/>
<ellipse cx="506.4" cy="662.2" rx="5.2" ry="4.2" transform="rotate(-20 506.4 662.2)" fill="none" stroke="#666" stroke-width="1"/>
<circle cx="506.8" cy="657.4" r="1.1" fill="#7a7ae8" stroke="#3a3aa0" stroke-width="0.4"/>
<circle cx="511.8" cy="660.2" r="1.1" fill="#7a7ae8" stroke="#3a3aa0" stroke-width="0.4"/>
<circle cx="510.4" cy="665.6" r="1.1" fill="#7a7ae8" stroke="#3a3aa0" stroke-width="0.4"/>
<circle cx="503.6" cy="666.4" r="1.1" fill="#7a7ae8" stroke="#3a3aa0" stroke-width="0.4"/>
<circle cx="501.2" cy="661.2" r="1.1" fill="#7a7ae8" stroke="#3a3aa0" stroke-width="0.4"/>
<rect x="432.8" y="673.7" width="24.6" height="1.3" fill="#a6d0f4"/><rect x="463" y="673.7" width="25.2" height="1.3" fill="#a6d0f4"/><rect x="491.2" y="673.7" width="30.4" height="1.3" fill="#a6d0f4"/>
<path d="M1082 664.6l3.6-3.4 3.6 3.4" fill="none" stroke="#eee" stroke-width="0.9"/>
<path d="M1095.4 660.8h1.6l2.2-2v7l-2.2-2h-1.6z" fill="none" stroke="#eee" stroke-width="0.7"/><path d="M1100.6 660.4a2.6 2.6 0 0 1 0 3.8M1102.2 659a4.6 4.6 0 0 1 0 6.6M1103.8 657.8a6.4 6.4 0 0 1 0 9" fill="none" stroke="#ddd" stroke-width="0.6"/>
<path d="M1112.4 658.6h8v5.8h-8zM1114.2 666.6h4.6M1116.4 664.6v2" fill="none" stroke="#eee" stroke-width="0.8"/><path d="M1110.8 658.4h3v3.2h-3z" fill="#0a0b12" stroke="#eee" stroke-width="0.6"/>
<text x="1136.6" y="659.5" font-family="'Liberation Sans',sans-serif" font-size="7.8" fill="#f4f4f4" textLength="16.6" lengthAdjust="spacingAndGlyphs">12:25</text>
<text x="1127" y="670.8" font-family="'Liberation Sans',sans-serif" font-size="7.8" fill="#f4f4f4" textLength="36" lengthAdjust="spacingAndGlyphs">23/12/2018</text>
<path d="M1174.4 657.4h9.4v7h-6l-1.6 1.9v-1.9h-1.8z" fill="#f4f4f4"/><path d="M1176 659.4h6.2M1176 661h6.2M1176 662.6h4" stroke="#0a0b12" stroke-width="0.5"/>
<circle cx="1183.6" cy="666.9" r="4.3" fill="#2a2a2e" stroke="#6a6a6a" stroke-width="0.7"/>
<text x="1181.7" y="669.4" font-family="'Liberation Sans',sans-serif" font-size="6.8" fill="#fff" font-weight="bold">3</text>
</g>
</svg>
</body></html>
